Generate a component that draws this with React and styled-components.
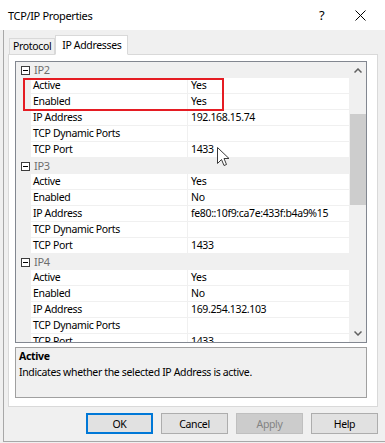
import styled, { createGlobalStyle } from "styled-components";

const GlobalStyle = createGlobalStyle`
  html, body { margin: 0; padding: 0; background: #f0f0f0; }
  body {
    font-family: "Noto Sans", "Open Sans", sans-serif;
    font-size: 10.5px;
    letter-spacing: -0.35px;
    color: #000;
  }
`;

const groups = [
  { name: "IP2", rows: [["Active", "Yes"], ["Enabled", "Yes"], ["IP Address", "192.168.15.74"], ["TCP Dynamic Ports", ""], ["TCP Port", "1433"]] },
  { name: "IP3", rows: [["Active", "Yes"], ["Enabled", "No"], ["IP Address", "fe80::10f9:ca7e:433f:b4a9%15"], ["TCP Dynamic Ports", ""], ["TCP Port", "1433"]] },
  { name: "IP4", rows: [["Active", "Yes"], ["Enabled", "No"], ["IP Address", "169.254.132.103"], ["TCP Dynamic Ports", ""], ["TCP Port", "1433"]] },
];

const Window = styled.div`
  width: 385px;
  height: 443px;
  position: relative;
  overflow: hidden;
  background: #f0f0f0;
`;

const TitleBar = styled.div`
  height: 30px;
  background: #fff;
  display: flex;
  align-items: center;
  padding-left: 8px;
  font-size: 11px;
  .title { flex: 1; }
  .help { width: 24px; font-size: 13px; margin-right: 12px; }
  .close { width: 20px; margin-right: 10px; display: flex; }
`;

const Client = styled.div`
  margin-left: 3px;
  width: 379px;
  height: 411px;
  border-left: 1px solid #a8a8a8;
  border-right: 1px solid #a8a8a8;
  border-bottom: 1px solid #a8a8a8;
  padding-left: 4px;
  box-sizing: content-box;
`;

const TabStrip = styled.div`
  display: flex;
  align-items: flex-end;
  height: 24px;
  padding-left: 1px;
  position: relative;
  z-index: 1;
`;

const Tab = styled.div`
  height: ${(p) => (p.$active ? "20px" : "16px")};
  padding: 0 ${(p) => (p.$active ? "6px" : "3px")};
  margin-bottom: ${(p) => (p.$active ? "-1px" : "0")};
  background: ${(p) => (p.$active ? "#fff" : "#f0f0f0")};
  border: 1px solid #d9d9d9;
  border-bottom: ${(p) => (p.$active ? "1px solid #fff" : "none")};
  display: flex;
  align-items: center;
  box-sizing: border-box;
  line-height: 1;
`;

const TabPage = styled.div`
  width: 370px;
  height: 353px;
  box-sizing: border-box;
  background: #fff;
  border: 1px solid #d9d9d9;
  padding: 6px 0 0 6px;
  display: flex;
  flex-direction: column;
`;

const Grid = styled.div`
  width: 352px;
  height: 282px;
  box-sizing: border-box;
  border: 1px solid #828790;
  display: flex;
  position: relative;
`;

const Rows = styled.div`
  flex: 1;
  overflow: hidden;
  position: relative;
`;

const Row = styled.div`
  display: grid;
  grid-template-columns: 15px 157px 1fr;
  height: 16px;
  line-height: 15px;
  background: ${(p) => (p.$category ? "#f0f0f0" : "#fff")};
  color: ${(p) => (p.$category ? "#6d6d6d" : "#000")};
  font-size: ${(p) => (p.$category ? "11px" : "inherit")};
`;

const Margin = styled.div`
  background: #f0f0f0;
  display: flex;
  align-items: center;
  justify-content: center;
`;

const Cell = styled.div`
  border-bottom: 1px solid #f0f0f0;
  border-right: ${(p) => (p.$split ? "1px solid #f0f0f0" : "none")};
  padding-left: ${(p) => (p.$split ? "2px" : "3px")};
  white-space: nowrap;
  overflow: hidden;
`;

const MinusBox = styled.div`
  width: 9px;
  height: 9px;
  box-sizing: border-box;
  border: 1px solid #3c3c3c;
  background: #fff;
  display: flex;
  align-items: center;
  justify-content: center;
  margin-left: 3px;
  &::after { content: ""; width: 5px; height: 1px; background: #000; }
`;

const Highlight = styled.div`
  position: absolute;
  left: 7px;
  top: 16px;
  width: 201px;
  height: 33px;
  box-sizing: border-box;
  border: 2px solid #e51c23;
`;

const Cursor = styled.svg`
  position: absolute;
  left: 201px;
  top: 85px;
`;

const ScrollBar = styled.div`
  width: 17px;
  background: #f0f0f0;
  display: flex;
  flex-direction: column;
  .arrow { height: 17px; display: flex; align-items: center; justify-content: center; }
  .track { flex: 1; padding: 35px 0 0 1px; }
  .thumb { height: 91px; background: #cdcdcd; }
`;

const Description = styled.div`
  margin-top: 4px;
  width: 352px;
  height: 51px;
  box-sizing: border-box;
  border: 1px solid #a0a0a0;
  background: #f0f0f0;
  padding: 0 3px;
  line-height: 16px;
  b { display: block; font-weight: 700; }
`;

const Buttons = styled.div`
  display: flex;
  gap: 8px;
  padding: 6px 0 0 78px;
`;

const Button = styled.div`
  width: 67px;
  height: 21px;
  box-sizing: border-box;
  display: flex;
  align-items: center;
  justify-content: center;
  background: ${(p) => (p.$disabled ? "#cccccc" : "#e1e1e1")};
  color: ${(p) => (p.$disabled ? "#838383" : "#000")};
  border: 1px solid ${(p) => (p.$default ? "#0078d7" : p.$disabled ? "#bfbfbf" : "#adadad")};
  box-shadow: ${(p) => (p.$default ? "inset 0 0 0 1px #0078d7" : "none")};
`;

export default function App() {
  return (
    <>
      <GlobalStyle />
      <Window>
        <TitleBar>
          <span className="title">TCP/IP Properties</span>
          <span className="help">?</span>
          <span className="close">
            <svg width="11" height="11" viewBox="0 0 11 11">
              <path d="M0.5 0.5 L10.5 10.5 M10.5 0.5 L0.5 10.5" stroke="#000" strokeWidth="1" />
            </svg>
          </span>
        </TitleBar>
        <Client>
          <TabStrip>
            <Tab>Protocol</Tab>
            <Tab $active>IP Addresses</Tab>
          </TabStrip>
          <TabPage>
            <Grid>
              <Rows>
                {groups.map((g) => (
                  <div key={g.name}>
                    <Row $category>
                      <Margin><MinusBox /></Margin>
                      <Cell>{g.name}</Cell>
                      <Cell />
                    </Row>
                    {g.rows.map(([k, v]) => (
                      <Row key={k}>
                        <Margin />
                        <Cell $split>{k}</Cell>
                        <Cell>{v}</Cell>
                      </Row>
                    ))}
                  </div>
                ))}
                <Highlight />
                <Cursor width="13" height="20" viewBox="0 0 13 20">
                  <path d="M0.5 0.5 L0.5 16.5 L4.5 12.5 L7 18.5 L9.5 17.5 L7 11.5 L12 11.5 Z" fill="#fff" stroke="#3a3a3a" strokeWidth="1" />
                </Cursor>
              </Rows>
              <ScrollBar>
                <div className="arrow">
                  <svg width="8" height="5" viewBox="0 0 8 5"><path d="M0.5 4.5 L4 1 L7.5 4.5" fill="none" stroke="#606060" strokeWidth="1.5" /></svg>
                </div>
                <div className="track"><div className="thumb" /></div>
                <div className="arrow">
                  <svg width="8" height="5" viewBox="0 0 8 5"><path d="M0.5 0.5 L4 4 L7.5 0.5" fill="none" stroke="#606060" strokeWidth="1.5" /></svg>
                </div>
              </ScrollBar>
            </Grid>
            <Description>
              <b>Active</b>
              Indicates whether the selected IP Address is active.
            </Description>
          </TabPage>
          <Buttons>
            <Button $default>OK</Button>
            <Button>Cancel</Button>
            <Button $disabled>Apply</Button>
            <Button>Help</Button>
          </Buttons>
        </Client>
      </Window>
    </>
  );
}
